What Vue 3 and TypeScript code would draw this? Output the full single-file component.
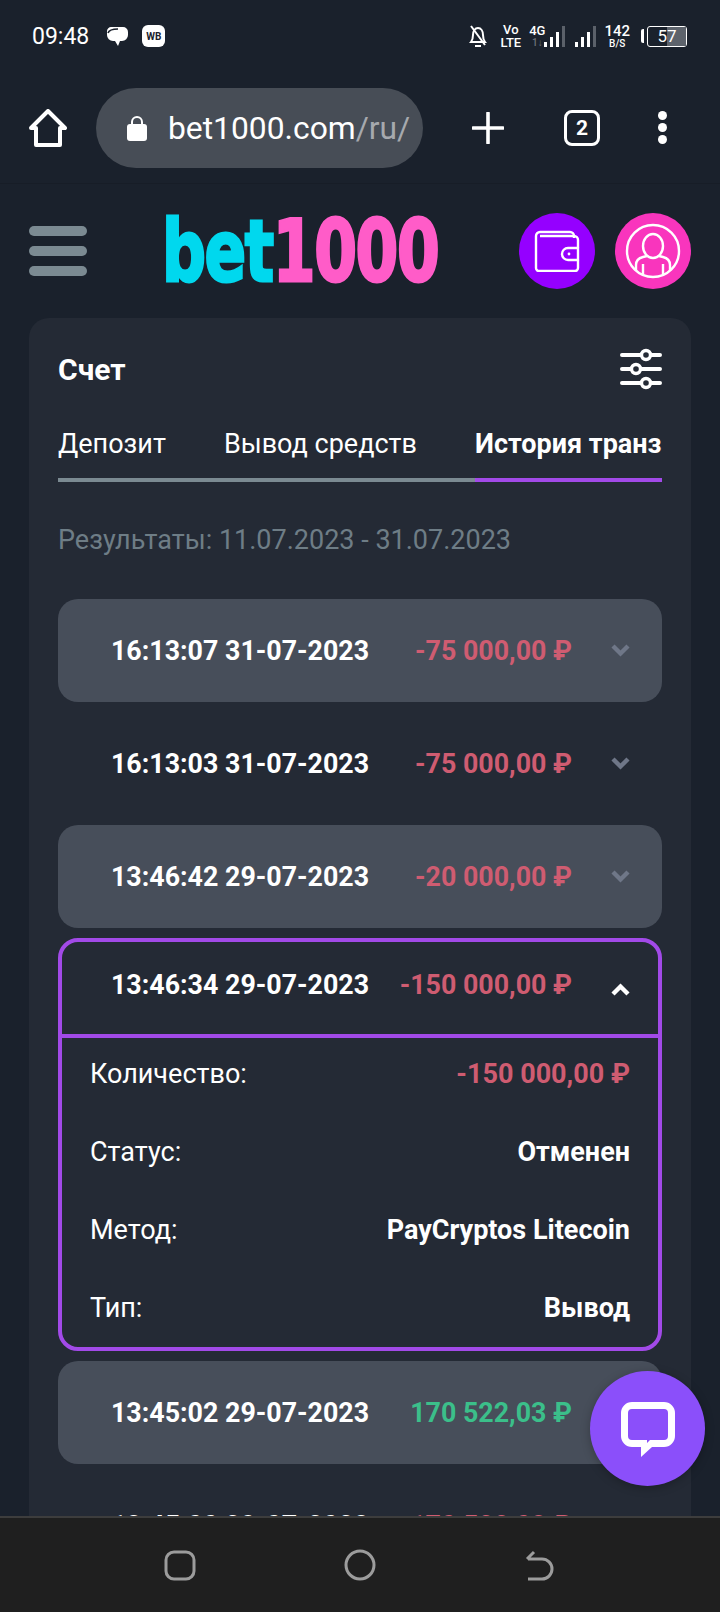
<script setup lang="ts">
interface Tx {
  time: string,
  amount: string,
  kind: "out" | "in",
  filled: boolean,
  open?: boolean
}

const tabs = ["Депозит", "Вывод средств", "История транзакций"];

const txs: Tx[] = [
  {time: "16:13:07 31-07-2023", amount: "-75 000,00 ₽", kind: "out", filled: true},
  {time: "16:13:03 31-07-2023", amount: "-75 000,00 ₽", kind: "out", filled: false},
  {time: "13:46:42 29-07-2023", amount: "-20 000,00 ₽", kind: "out", filled: true},
  {time: "13:46:34 29-07-2023", amount: "-150 000,00 ₽", kind: "out", filled: false, open: true},
  {time: "13:45:02 29-07-2023", amount: "170 522,03 ₽", kind: "in", filled: true},
  {time: "13:45:00 29-07-2023", amount: "-170 522,03 ₽", kind: "out", filled: false},
];

const details = [
  {label: "Количество:", value: "-150 000,00 ₽", red: true},
  {label: "Статус:", value: "Отменен", red: false},
  {label: "Метод:", value: "PayCryptos Litecoin", red: false},
  {label: "Тип:", value: "Вывод", red: false},
];
</script>

<template>
  <div class="screen">
    <div class="status">
      <span class="clock">09:48</span>
      <svg class="note" width="24" height="24" viewBox="0 0 24 24">
        <path d="M6 3h12a5 5 0 0 1 5 5v3a6 6 0 0 1-6 6h-2l-2 5-3-5H8a6 6 0 0 1-6-6V7c0-2 2-4 4-4z" fill="#fff"/>
        <path d="M3 9c1-3 5-4 10-4" stroke="#1a212c" stroke-width="1.6" fill="none"/>
      </svg>
      <span class="wb">WB</span>
      <div class="status-right">
        <svg width="18" height="24" viewBox="0 0 18 24" fill="none" stroke="#fff" stroke-width="2">
          <path d="M2 18c1.500-2 2-3 2-7 0-4 2-7 5-7s5 3 5 7c0 4 .5 5 2 7z"/>
          <path d="M6 22h6M2 2l14 19"/>
        </svg>
        <div class="stack vo"><span>Vo</span><span>LTE</span></div>
        <div class="stack net"><span>4G</span><span class="arrows">1↓</span></div>
        <div class="bars">
          <i class="b1"></i><i class="b2"></i><i class="b3"></i><i class="b4 dim"></i>
        </div>
        <div class="bars second">
          <i class="b1"></i><i class="b2"></i><i class="b3"></i><i class="b4 dim"></i>
        </div>
        <div class="stack speed"><span>142</span><span class="bs">B/S</span></div>
        <div class="battery-wrap">
          <span class="nub"></span>
          <div class="battery"><span class="level"></span><span class="pct">57</span></div>
        </div>
      </div>
    </div>

    <div class="toolbar">
      <svg class="home" width="38" height="38" viewBox="0 0 38 38" fill="none" stroke="#fff" stroke-width="4" stroke-linejoin="round">
        <path d="M2 19L19 2l17 17h-5v17H7V19z"/>
      </svg>
      <div class="url">
        <svg width="22" height="26" viewBox="0 0 22 26">
          <path d="M6 10V7a5 5 0 0 1 10 0v3" fill="none" stroke="#fff" stroke-width="2"/>
          <rect x="1" y="9" width="20" height="17" rx="3" fill="#fff"/>
        </svg>
        <span class="url-text">bet1000.com<span class="url-dim">/ru/</span></span>
      </div>
      <svg class="plus" width="32" height="32" viewBox="0 0 32 32" stroke="#fff" stroke-width="3.6" stroke-linecap="round">
        <path d="M16 1v30M1 16h30"/>
      </svg>
      <div class="tabs-count">2</div>
      <div class="dots"><i></i><i></i><i></i></div>
    </div>

    <div class="page">
      <div class="site-head">
        <div class="burger"><i></i><i></i><i></i></div>
        <div class="logo"><span class="logo-a">bet</span><span class="logo-b">1000</span></div>
        <div class="round wallet">
          <svg width="46" height="42" viewBox="0 0 46 42" fill="none" stroke="#fff" stroke-width="2.4" stroke-linejoin="round">
            <path d="M2 8V6a4 4 0 0 1 4-4h30a4 4 0 0 1 4 4v2"/>
            <path d="M6 6h34a4 4 0 0 1 4 4v8M44 30v8a3 3 0 0 1-3 3H5a3 3 0 0 1-3-3V8"/>
            <path d="M44 18H34a6 6 0 0 0 0 12h10z"/>
            <circle cx="35" cy="24" r="1.4" fill="#fff" stroke="none"/>
          </svg>
        </div>
        <div class="round profile">
          <svg width="56" height="56" viewBox="0 0 56 56" fill="none" stroke="#fff" stroke-width="2.4">
            <circle cx="28" cy="28" r="26"/>
            <ellipse cx="28" cy="23" rx="10" ry="12"/>
            <path d="M11 48v-6c0-5 3-7 7-8l4-1M45 48v-6c0-5-3-7-7-8l-4-1M18 41v11M38 41v11"/>
          </svg>
        </div>
      </div>

      <div class="card">
        <div class="card-head">
          <span class="card-title">Счет</span>
          <svg width="42" height="42" viewBox="0 0 42 42" stroke="#fff" stroke-width="4" stroke-linecap="round">
            <path d="M2 7h38M2 21h38M2 35h38"/>
            <circle cx="26" cy="7" r="4.5" fill="#242a35" stroke-width="3.4"/>
            <circle cx="16" cy="21" r="4.5" fill="#242a35" stroke-width="3.4"/>
            <circle cx="26" cy="35" r="4.5" fill="#242a35" stroke-width="3.4"/>
          </svg>
        </div>

        <div class="tabs">
          <span v-for="(tab, i) in tabs" :key="tab" class="tab" :class="{active: i === 2}">{{ tab }}</span>
        </div>

        <div class="results">Результаты: 11.07.2023 - 31.07.2023</div>

        <div class="list">
          <div v-for="tx in txs" :key="tx.time" class="tx" :class="{filled: tx.filled, open: tx.open}">
            <div class="tx-row">
              <span class="tx-time">{{ tx.time }}</span>
              <span class="tx-amount" :class="tx.kind">{{ tx.amount }}</span>
              <svg class="chevron" width="19" height="13" viewBox="0 0 19 13" fill="none" stroke-width="4.4" :stroke="tx.open ? '#fff' : '#6f7788'">
                <path v-if="tx.open" d="M2 11l7.5-7.5L17 11"/>
                <path v-else d="M2 2l7.5 7.5L17 2"/>
              </svg>
            </div>
            <div v-if="tx.open" class="tx-body">
              <div v-for="d in details" :key="d.label" class="detail">
                <span class="detail-label">{{ d.label }}</span>
                <span class="detail-value" :class="{out: d.red}">{{ d.value }}</span>
              </div>
            </div>
          </div>
        </div>
      </div>
    </div>

    <div class="navbar">
      <svg width="32" height="31" viewBox="0 0 32 31" fill="none" stroke="#9c9c9c" stroke-width="3">
        <rect x="2" y="2" width="28" height="27" rx="8"/>
      </svg>
      <svg width="32" height="32" viewBox="0 0 32 32" fill="none" stroke="#9c9c9c" stroke-width="3">
        <circle cx="16" cy="16" r="14"/>
      </svg>
      <svg width="32" height="32" viewBox="0 0 32 32" fill="none" stroke="#9c9c9c" stroke-width="3">
        <path d="M4 30h14a9 9 0 0 0 0-20H4M10 3L3 10"/>
      </svg>
    </div>

    <div class="chat">
      <svg width="60" height="60" viewBox="0 0 60 60">
        <path d="M14 3h32a11 11 0 0 1 11 11v23a11 11 0 0 1-11 11H34L23 58V48h-9A11 11 0 0 1 3 37V14A11 11 0 0 1 14 3z" fill="#fff"/>
        <path d="M14 10h32a4 4 0 0 1 4 4v23a4 4 0 0 1-4 4H32l-3 3v-3H14a4 4 0 0 1-4-4V14a4 4 0 0 1 4-4z" fill="#8b4ffa"/>
      </svg>
    </div>
  </div>
</template>

<style scoped>
.screen {
  position: relative;
  width: 720px;
  height: 1612px;
  display: flex;
  flex-direction: column;
  overflow: hidden;
  background: #1a212c;
  color: #fff;
  font-family: Roboto, "Liberation Sans", sans-serif;
}

.status {
  flex: none;
  height: 72px;
  display: flex;
  align-items: center;
  padding: 0 33px 0 32px;
  box-sizing: border-box;
}

.clock {
  font-size: 23px;
}

.note {
  margin-left: 16px;
}

.wb {
  margin-left: 13px;
  width: 23px;
  height: 22px;
  border-radius: 6px;
  background: #fff;
  color: #1a212c;
  font-size: 10px;
  font-weight: 700;
  display: flex;
  align-items: center;
  justify-content: center;
}

.status-right {
  margin-left: auto;
  display: flex;
  align-items: center;
}

.stack {
  display: flex;
  flex-direction: column;
  align-items: center;
  font-size: 13px;
  line-height: 13px;
  font-weight: 500;
}

.vo {
  margin-left: 13px;
}

.net {
  margin-left: 8px;
}

.arrows {
  color: #6c727b;
  font-size: 10px;
  line-height: 11px;
}

.bars {
  display: flex;
  align-items: flex-end;
  gap: 3px;
  height: 21px;
  margin-left: -1px;
}

.bars.second {
  margin-left: 10px;
}

.bars i {
  display: block;
  width: 3px;
  background: #fff;
}

.b1 {
  height: 5px;
}

.b2 {
  height: 10px;
}

.b3 {
  height: 15px;
}

.bars .b4 {
  height: 21px;
}

.bars .dim {
  background: #5b616a;
}

.speed {
  margin-left: 8px;
  font-size: 15px;
  line-height: 15px;
}

.bs {
  font-size: 10px;
  line-height: 10px;
}

.battery-wrap {
  display: flex;
  align-items: center;
  margin-left: 11px;
}

.nub {
  width: 3px;
  height: 14px;
  background: #fff;
  margin-right: 3px;
  border-radius: 2px 0 0 2px;
}

.battery {
  position: relative;
  width: 40px;
  height: 21px;
  border: 1.5px solid #fff;
  border-radius: 3px;
  box-sizing: border-box;
  display: flex;
  align-items: center;
  justify-content: center;
}

.level {
  position: absolute;
  top: 0;
  right: 0;
  bottom: 0;
  width: 19px;
  background: #5d636c;
}

.pct {
  position: relative;
  font-size: 17px;
}

.toolbar {
  flex: none;
  height: 112px;
  display: flex;
  align-items: center;
  box-sizing: border-box;
  border-bottom: 1px solid #171d27;
  padding-left: 29px;
}

.url {
  margin-left: 29px;
  width: 327px;
  height: 80px;
  border-radius: 40px;
  background: #474d56;
  display: flex;
  align-items: center;
  padding-left: 30px;
  box-sizing: border-box;
  overflow: hidden;
}

.url-text {
  margin-left: 20px;
  font-size: 31.8px;
  white-space: nowrap;
}

.url-dim {
  color: #a6a9ae;
}

.plus {
  margin-left: 49px;
}

.tabs-count {
  margin-left: 60px;
  width: 36px;
  height: 36px;
  box-sizing: border-box;
  border: 3.5px solid #fff;
  border-radius: 8px;
  display: flex;
  align-items: center;
  justify-content: center;
  font-size: 21px;
  font-weight: 700;
}

.dots {
  margin-left: 58px;
  display: flex;
  flex-direction: column;
  gap: 3px;
}

.dots i {
  display: block;
  width: 9px;
  height: 9px;
  border-radius: 50%;
  background: #fff;
}

.page {
  flex: 1;
  min-height: 0;
  overflow: hidden;
  background: #1a212c;
}

.site-head {
  height: 133px;
  display: flex;
  align-items: center;
  padding: 0 29px;
  box-sizing: border-box;
}

.burger {
  width: 58px;
  display: flex;
  flex-direction: column;
  gap: 10px;
}

.burger i {
  display: block;
  height: 10px;
  border-radius: 5px;
  background: #7b8a92;
}

.logo {
  width: 278px;
  margin-left: 75px;
  font-family: "DejaVu Sans", sans-serif;
  font-size: 86px;
  font-weight: 700;
  line-height: 68px;
  height: 68px;
  letter-spacing: -2px;
  white-space: nowrap;
  transform: scaleX(0.715);
  transform-origin: left center;
}

.logo-a {
  color: #00d8ee;
  -webkit-text-stroke: 3px #00d8ee;
}

.logo-b {
  color: #ff5cc8;
  -webkit-text-stroke: 3px #ff5cc8;
}

.round {
  width: 76px;
  height: 76px;
  border-radius: 50%;
  display: flex;
  align-items: center;
  justify-content: center;
  flex: none;
}

.wallet {
  margin-left: 79px;
  background: #9500ff;
}

.profile {
  margin-left: 20px;
  background: #f935bd;
}

.card {
  margin: 1px 29px 0;
  padding: 0 29px;
  background: #242a35;
  border-radius: 20px;
  min-height: 1300px;
}

.card-head {
  height: 102px;
  display: flex;
  align-items: center;
  justify-content: space-between;
}

.card-title {
  font-size: 30px;
  font-weight: 700;
}

.tabs {
  display: flex;
  gap: 58px;
  overflow: hidden;
  height: 62px;
  box-shadow: inset 0 -4px 0 #7b8a92;
}

.tab {
  flex: none;
  font-size: 27px;
  line-height: 40px;
  height: 62px;
  padding-top: 4px;
  box-sizing: border-box;
  white-space: nowrap;
}

.tab.active {
  font-weight: 700;
  border-bottom: 4px solid #a24ae8;
}

.results {
  margin-top: 40px;
  font-size: 27px;
  line-height: 36px;
  color: #6e7d86;
}

.list {
  margin-top: 41px;
  display: flex;
  flex-direction: column;
  gap: 10px;
}

.tx {
  border-radius: 20px;
}

.tx.filled {
  background: #474e5a;
}

.tx.open {
  border: 4px solid #a24ae8;
}

.tx-row {
  height: 103px;
  display: flex;
  align-items: center;
  padding: 0 32px 0 53px;
  box-sizing: border-box;
}

.tx.open .tx-row {
  height: 96px;
  padding: 0 28px 6px 49px;
  border-bottom: 4px solid #a24ae8;
}

.tx-time {
  font-size: 26.8px;
  font-weight: 700;
}

.tx-amount {
  margin-left: auto;
  font-size: 26.8px;
  font-weight: 700;
}

.out {
  color: #cf5c71;
}

.in {
  color: #3bbf8a;
}

.chevron {
  margin-left: 39px;
  flex: none;
}

.tx.open .chevron {
  margin-top: 8px;
}

.tx-body {
  margin-top: -3px;
  padding: 0 28px;
}

.detail {
  height: 78px;
  display: flex;
  align-items: center;
  justify-content: space-between;
  font-size: 27px;
}

.detail-value {
  font-weight: 700;
}

.navbar {
  flex: none;
  height: 96px;
  display: flex;
  align-items: center;
  justify-content: center;
  gap: 148px;
  background: #1f1f1f;
  border-top: 2px solid #3d3d3d;
  box-sizing: border-box;
}

.chat {
  position: absolute;
  left: 590px;
  top: 1371px;
  width: 115px;
  height: 115px;
  border-radius: 50%;
  background: #8b4ffa;
  box-shadow: 0 2px 10px rgba(0, 0, 0, 0.25);
  display: flex;
  align-items: center;
  justify-content: center;
}
</style>
